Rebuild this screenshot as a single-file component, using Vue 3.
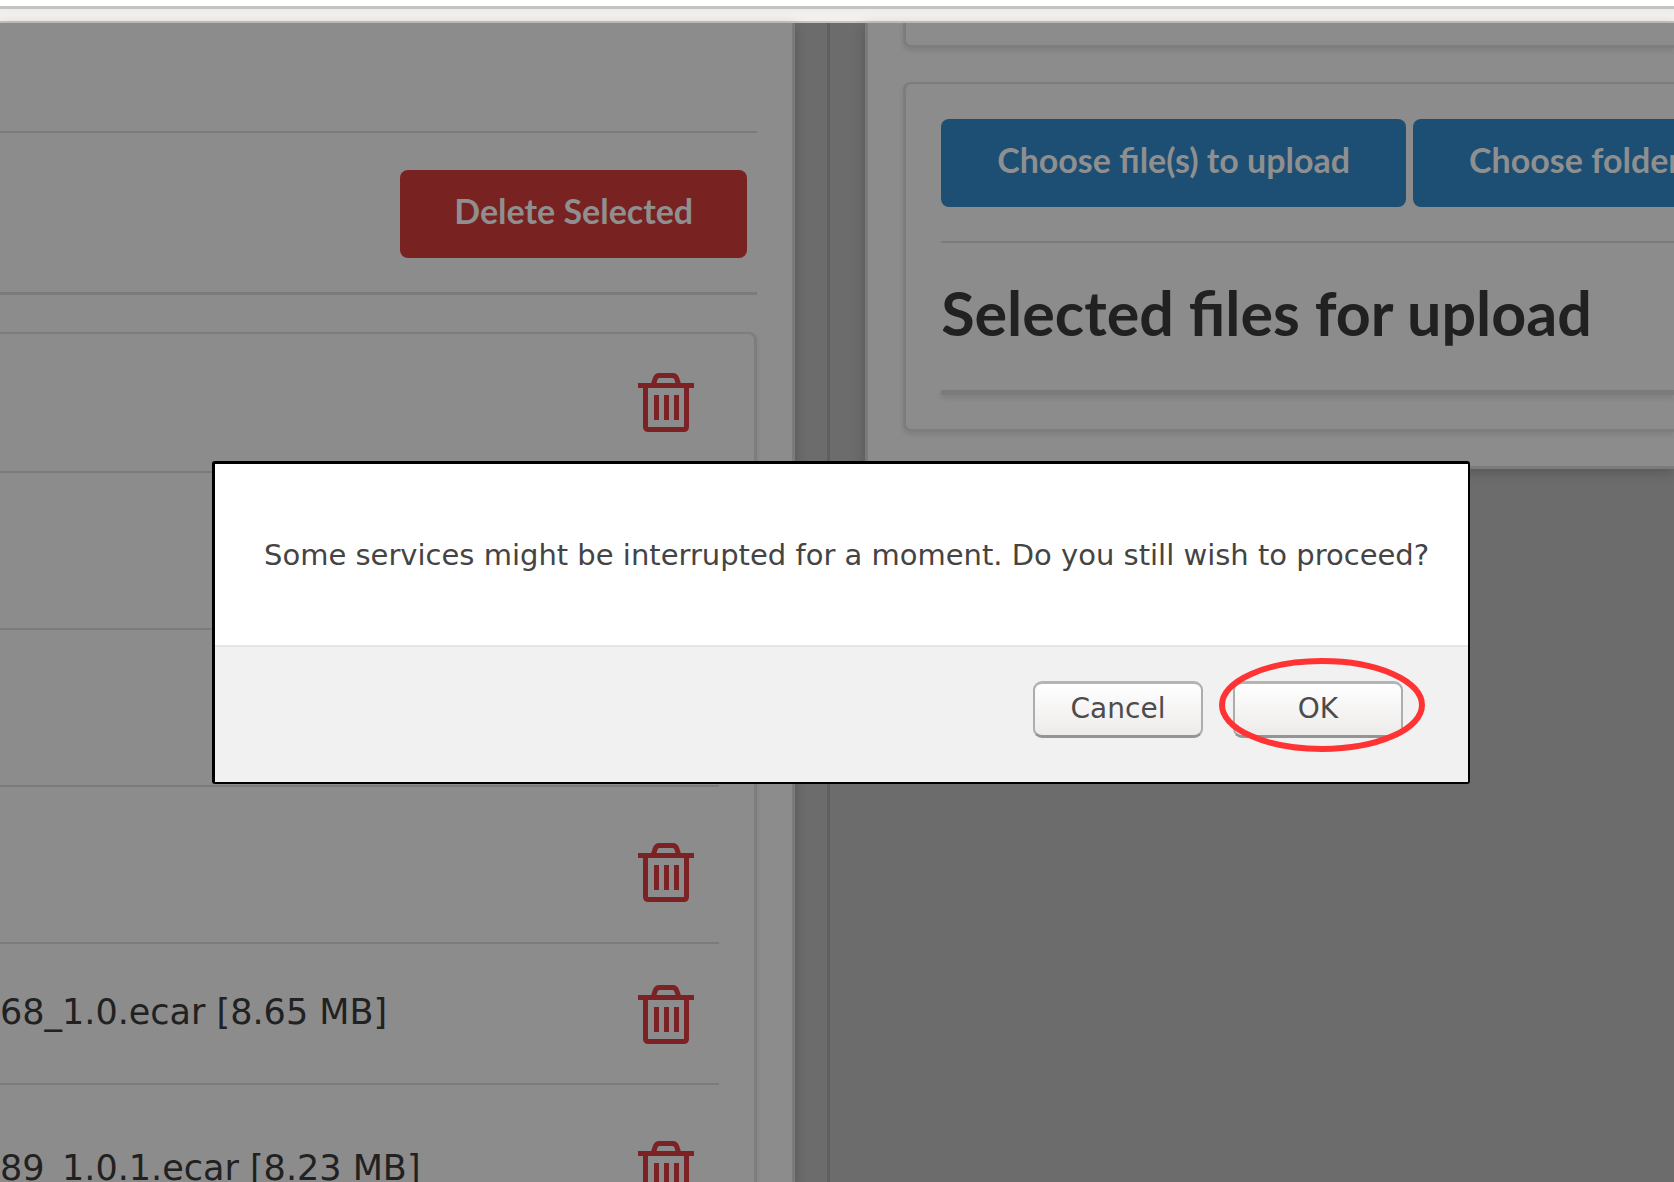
<script setup>
import { ref } from 'vue'

const files = ref([
  { id: 1, name: '', size: 'first' },
  { id: 2, name: '', size: 'tall' },
  { id: 3, name: '', size: 'tall' },
  { id: 4, name: '', size: 'tall' },
  { id: 5, name: '68_1.0.ecar [8.65 MB]', size: 'regular' },
  { id: 6, name: '89_1.0.1.ecar [8.23 MB]', size: 'tall' },
])
</script>

<template>
  <div class="window">
    <header class="chrome">
      <div class="toolbar"></div>
    </header>

    <main class="page">
      <section class="pane existing">
        <div class="spacer"></div>
        <div class="actions">
          <button type="button" class="btn danger">Delete Selected</button>
        </div>
        <ul class="card list">
          <li v-for="file in files" :key="file.id" :class="['row', file.size]">
            <span class="name">{{ file.name }}</span>
            <button type="button" class="trash" aria-label="Delete file">
              <svg viewBox="0 0 56 59" width="56" height="59" fill="none" stroke="currentColor" stroke-width="5">
                <path d="M0 12.5H56" />
                <path d="M15.5 11L17 6.500Q18 2.500 21.500 2.500H34.500Q38 2.500 39 6.500L40.500 11" />
                <path d="M7.500 14V53.500Q7.500 56.500 10.500 56.500H45.500Q48.500 56.500 48.500 53.500V14" />
                <path d="M18.500 22V47M28.500 22V47M38.500 22V47" />
              </svg>
            </button>
          </li>
        </ul>
      </section>

      <div class="gutter"></div>
      <div class="gutter second"></div>

      <section class="pane upload">
        <div class="card previous"></div>
        <div class="card chooser">
          <div class="choices">
            <button type="button" class="btn primary">Choose file(s) to upload</button>
            <button type="button" class="btn primary">Choose folder</button>
          </div>
          <h2>Selected files for upload</h2>
          <div class="selection"></div>
        </div>
      </section>
    </main>

    <div class="dialog" role="alertdialog" aria-modal="true" aria-labelledby="message">
      <p id="message">Some services might be interrupted for a moment. Do you still wish to proceed?</p>
      <div class="footer">
        <button type="button" class="plain">Cancel</button>
        <div class="marked">
          <button type="button" class="plain">OK</button>
          <svg class="ring" viewBox="0 0 208 96" width="208" height="96" aria-hidden="true">
            <ellipse cx="104" cy="48" rx="100" ry="44" fill="none" stroke="#ff3333" stroke-width="6" />
          </svg>
        </div>
      </div>
    </div>
  </div>
</template>

<style>
body {
  margin: 0;
}
</style>

<style scoped>
.window {
  position: relative;
  display: flex;
  flex-direction: column;
  height: 100vh;
  overflow: hidden;
  background: #6c6c6c;
  color: #212121;
  font-family: "DejaVu Sans", sans-serif;
}

* {
  box-sizing: border-box;
}

button {
  margin: 0;
  cursor: pointer;
}

.chrome {
  flex: none;
  padding-top: 6px;
  background: #fff;
}

.toolbar {
  height: 17px;
  border-top: 3px solid #c5c3c0;
  border-bottom: 2px solid #c9c3bf;
  background: linear-gradient(#ebebe9, #f1f0ee 5px);
}

.page {
  flex: 1;
  display: flex;
  min-height: 0;
}

.pane {
  background: #8c8c8c;
  box-shadow: 0 3px 12px rgba(0, 0, 0, 0.2);
}

.existing {
  flex: 0 0 47.5%;
  padding-right: 35px;
  border-right: 3px solid #7b7b7b;
}

.spacer {
  height: 108px;
}

.actions {
  display: flex;
  justify-content: flex-end;
  padding: 37px 10px 34px 0;
  border-top: 2px solid #7b7b7b;
  border-bottom: 3px solid #7b7b7b;
}

.btn {
  height: 88px;
  padding: 0 54px 6px;
  border: 0;
  border-radius: 8px;
  color: #8f8f8f;
  font: bold 34px/40px Lato, sans-serif;
  white-space: nowrap;
}

.danger {
  background: #792222;
}

.primary {
  padding: 0 56px 6px;
  background: #1d4e73;
}

.card {
  margin: 0;
  border: 3px solid #7d7d7d;
  border-top-width: 2px;
  border-radius: 8px;
  box-shadow: 0 3px 5px rgba(0, 0, 0, 0.09);
}

.list {
  margin-top: 37px;
  padding: 0 35px 0 0;
  border-left: 0;
  border-top-left-radius: 0;
  list-style: none;
}

.row {
  display: flex;
  justify-content: space-between;
  padding: 41px 25px 39px 0;
  border-bottom: 2px solid #7b7b7b;
}

.row.first {
  padding-top: 39px;
}

.row.tall {
  padding: 56px 25px 40px 0;
}

.name {
  font-size: 35px;
  line-height: 54px;
  white-space: nowrap;
}

.trash {
  display: block;
  padding: 0;
  border: 0;
  background: none;
  color: #7c2224;
}

.trash svg {
  display: block;
}

.gutter {
  flex: 0 0 35px;
  border-right: 3px solid #5f5f5f;
}

.gutter.second {
  border-right: 0;
}

.upload {
  flex: 1 0 0;
  align-self: flex-start;
  min-width: 0;
  padding: 0 0 34px 35px;
  border: solid #7b7b7b;
  border-width: 0 0 3px 3px;
}

.upload .card {
  border-right: 0;
  border-top-right-radius: 0;
  border-bottom-right-radius: 0;
}

.upload .previous {
  height: 25px;
  border-top: 0;
  border-top-left-radius: 0;
}

.chooser {
  margin-top: 34px;
  padding: 35px 0 34px 35px;
}

.choices {
  display: flex;
  gap: 7px;
  padding-bottom: 34px;
  border-bottom: 2px solid #7b7b7b;
}

.choices .btn {
  flex: none;
}

h2 {
  margin: 0;
  padding: 34px 0 41px;
  font: bold 61px/72px Lato, sans-serif;
  white-space: nowrap;
}

.selection {
  height: 5px;
  background: #7b7b7b;
  box-shadow: 0 3px 5px rgba(0, 0, 0, 0.1);
}

.dialog {
  position: absolute;
  top: 461px;
  left: 212px;
  right: 204px;
  border: solid #000;
  border-width: 3px 2px 2px 3px;
  border-radius: 3px;
  background: #fff;
}

.dialog p {
  margin: 0;
  padding: 71px 0 70px 49px;
  color: #444;
  font-size: 29px;
  line-height: 40px;
  white-space: nowrap;
}

.footer {
  display: flex;
  justify-content: flex-end;
  gap: 30px;
  padding: 34px 65px 44px 0;
  border-top: 2px solid #e5e5e5;
  background: #f1f1f1;
}

.marked {
  position: relative;
}

.plain {
  display: block;
  width: 170px;
  height: 57px;
  padding: 0 0 2px;
  border: 2px solid #adadad;
  border-top: 3px solid #b4b4b4;
  border-bottom: 3px solid #949494;
  border-radius: 9px;
  background: linear-gradient(#fff, #edebea);
  color: #4c4c4c;
  font: 28px/40px "DejaVu Sans", sans-serif;
}

.ring {
  position: absolute;
  top: -24px;
  left: -15px;
  pointer-events: none;
}
</style>
